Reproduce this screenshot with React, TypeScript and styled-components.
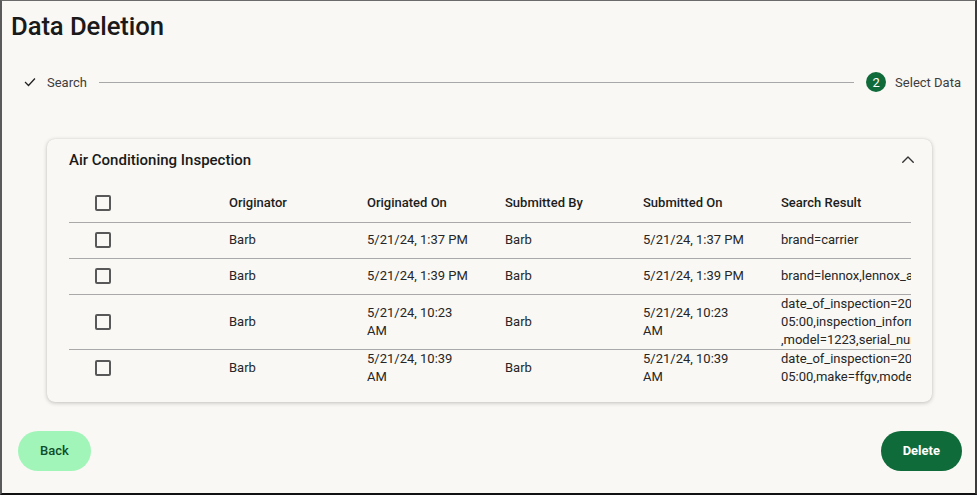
import styled, { createGlobalStyle } from "styled-components";

const GlobalStyle = createGlobalStyle`
  html, body {
    margin: 0;
    padding: 0;
    background: #f9f8f4;
  }
  * {
    box-sizing: border-box;
  }
`;

const Frame = styled.div`
  width: 977px;
  height: 495px;
  overflow: hidden;
  background: #f9f8f4;
  border-top: 1px solid #6b6b6b;
  border-left: 2px solid #5a5a5a;
  border-right: 2px solid #3c3c3c;
  border-bottom: 2px solid #111;
  font-family: Roboto, "Liberation Sans", sans-serif;
  color: #1d1d1d;
  display: flex;
  flex-direction: column;
`;

const Title = styled.h1`
  margin: 9px 0 0 9px;
  font-size: 25.7px;
  font-weight: 500;
  line-height: 32px;
  color: #1a1a1a;
  letter-spacing: -0.1px;
`;

const Stepper = styled.div`
  display: flex;
  align-items: center;
  height: 24px;
  margin: 28px 14px 0 22px;
  gap: 12px;
`;

const Step = styled.div`
  display: flex;
  align-items: center;
  gap: 9px;
  font-size: 13px;
  color: #3d3d3d;
`;

const StepNum = styled.span`
  width: 20px;
  height: 20px;
  border-radius: 50%;
  background: #0f6b3a;
  color: #fff;
  display: flex;
  align-items: center;
  justify-content: center;
  font-size: 13px;
`;

const Connector = styled.div`
  flex: 1;
  height: 1px;
  background: #a8a8a8;
`;

const Card = styled.section`
  margin: 45px 43px 0 45px;
  background: #f9f8f4;
  border-radius: 8px;
  box-shadow: 0 1px 4px rgba(0, 0, 0, 0.22), 0 0 1px rgba(0, 0, 0, 0.12);
  padding: 0 21px 16px 22px;
`;

const CardHeader = styled.div`
  height: 44px;
  display: flex;
  align-items: center;
  justify-content: space-between;
  padding-bottom: 2px;
`;

const CardTitle = styled.h2`
  margin: 0;
  font-size: 15px;
  font-weight: 500;
  color: #1a1a1a;
`;

const Chevron = styled.svg`
  margin-right: -4px;
`;

const TableWrap = styled.div`
  overflow: hidden;
  margin-top: 2px;
`;

const Table = styled.table`
  border-collapse: collapse;
  table-layout: fixed;
  width: 972px;
  font-size: 13px;
  line-height: 18px;
`;

const Th = styled.th<{ $w: number }>`
  width: ${(p) => p.$w}px;
  height: 37px;
  padding: 0 24px 0 0;
  text-align: left;
  font-weight: 500;
  color: #1d1d1d;
  border-bottom: 1px solid #a9a9a9;
`;

const Tr = styled.tr`
  border-bottom: 1px solid #a9a9a9;
  &:last-child {
    border-bottom: none;
  }
`;

const Td = styled.td`
  height: 36px;
  padding: 0 33px 0 0;
  vertical-align: middle;
  color: #262626;
`;

const CheckCell = styled.div`
  padding-left: 26px;
  display: flex;
  align-items: center;
`;

const Box = styled.span`
  width: 16px;
  height: 16px;
  border: 2px solid #585858;
  border-radius: 2px;
  display: inline-block;
`;

const ResultLine = styled.div`
  white-space: nowrap;
`;

const Footer = styled.div`
  display: flex;
  justify-content: space-between;
  align-items: center;
  margin: 29px 13px 0 16px;
`;

const Button = styled.button<{ $primary?: boolean }>`
  height: 40px;
  border: none;
  border-radius: 20px;
  padding: 0 22px;
  font-family: Roboto, "Liberation Sans", sans-serif;
  font-size: 13px;
  font-weight: ${(p) => (p.$primary ? 700 : 500)};
  background: ${(p) => (p.$primary ? "#0f6b3a" : "#a1f5b9")};
  color: ${(p) => (p.$primary ? "#ffffff" : "#0f4d2b")};
  min-width: ${(p) => (p.$primary ? 81 : 72)}px;
  cursor: pointer;
`;

type Row = {
  originator: string;
  originatedOn: string;
  submittedBy: string;
  submittedOn: string;
  result: string[];
};

const rows: Row[] = [
  { originator: "Barb", originatedOn: "5/21/24, 1:37 PM", submittedBy: "Barb", submittedOn: "5/21/24, 1:37 PM", result: ["brand=carrier"] },
  { originator: "Barb", originatedOn: "5/21/24, 1:39 PM", submittedBy: "Barb", submittedOn: "5/21/24, 1:39 PM", result: ["brand=lennox,lennox_air"] },
  {
    originator: "Barb",
    originatedOn: "5/21/24, 10:23 AM",
    submittedBy: "Barb",
    submittedOn: "5/21/24, 10:23 AM",
    result: ["date_of_inspection=2024-05-21T10:23:00-", "05:00,inspection_information=ok", ",model=1223,serial_number=4455"],
  },
  {
    originator: "Barb",
    originatedOn: "5/21/24, 10:39 AM",
    submittedBy: "Barb",
    submittedOn: "5/21/24, 10:39 AM",
    result: ["date_of_inspection=2024-05-21T10:39:00-", "05:00,make=ffgv,model=88"],
  },
];

function CheckIcon() {
  return (
    <svg width="12" height="12" viewBox="0 0 24 24" fill="none" stroke="#222" strokeWidth="2.6" strokeLinecap="square">
      <path d="M3 13l6 6L21 6" />
    </svg>
  );
}

export default function App(): JSX.Element {
  return (
    <Frame>
      <GlobalStyle />
      <Title>Data Deletion</Title>

      <Stepper>
        <Step>
          <CheckIcon />
          <span style={{ marginLeft: 2 }}>Search</span>
        </Step>
        <Connector />
        <Step>
          <StepNum>2</StepNum>
          Select Data
        </Step>
      </Stepper>

      <Card>
        <CardHeader>
          <CardTitle>Air Conditioning Inspection</CardTitle>
          <Chevron width="14" height="14" viewBox="0 0 24 24" fill="none" stroke="#333" strokeWidth="2.4" strokeLinecap="round" strokeLinejoin="round">
            <path d="M3 16l9-9 9 9" />
          </Chevron>
        </CardHeader>
        <TableWrap>
          <Table>
            <thead>
              <tr>
                <Th $w={160}>
                  <CheckCell>
                    <Box />
                  </CheckCell>
                </Th>
                <Th $w={138}>Originator</Th>
                <Th $w={138}>Originated On</Th>
                <Th $w={138}>Submitted By</Th>
                <Th $w={138}>Submitted On</Th>
                <Th $w={260}>Search Result</Th>
              </tr>
            </thead>
            <tbody>
              {rows.map((r, i) => (
                <Tr key={i}>
                  <Td>
                    <CheckCell>
                      <Box />
                    </CheckCell>
                  </Td>
                  <Td>{r.originator}</Td>
                  <Td>{r.originatedOn}</Td>
                  <Td>{r.submittedBy}</Td>
                  <Td>{r.submittedOn}</Td>
                  <Td>
                    {r.result.map((line, j) => (
                      <ResultLine key={j}>{line}</ResultLine>
                    ))}
                  </Td>
                </Tr>
              ))}
            </tbody>
          </Table>
        </TableWrap>
      </Card>

      <Footer>
        <Button>Back</Button>
        <Button $primary>Delete</Button>
      </Footer>
    </Frame>
  );
}
